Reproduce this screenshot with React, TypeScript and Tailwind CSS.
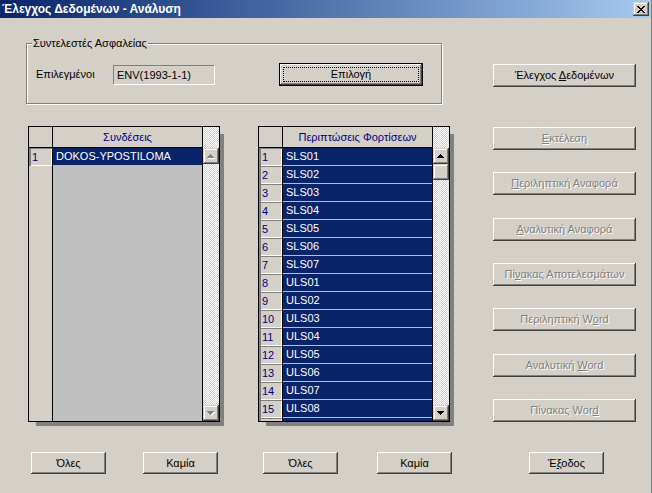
import React from "react";

const BEVEL =
  "shadow-[inset_-1px_-1px_0_#404040,inset_1px_1px_0_#ffffff,inset_-2px_-2px_0_#808080,inset_2px_2px_0_#d4d0c8]";
const SBEVEL =
  "shadow-[inset_-1px_-1px_0_#404040,inset_1px_1px_0_#d4d0c8,inset_-2px_-2px_0_#808080,inset_2px_2px_0_#ffffff]";

function Btn({
  children,
  className = "",
  disabled = false,
}: {
  children: React.ReactNode;
  className?: string;
  disabled?: boolean;
}) {
  return (
    <div
      className={`flex items-center justify-center bg-[#d4d0c8] text-[11px] leading-none ${BEVEL} ${
        disabled ? "text-[#808080] [text-shadow:1px_1px_0_#ffffff]" : "text-black"
      } ${className}`}
    >
      <span className="whitespace-nowrap">{children}</span>
    </div>
  );
}

function Arrow({ up, disabled }: { up: boolean; disabled?: boolean }) {
  const d = up
    ? "M3 0h1v1h1v1h1v1h1v1H0V3h1V2h1V1h1z"
    : "M0 0h7v1H6v1H5v1H4v1H3V3H2V2H1V1H0z";
  return (
    <svg width="8" height="5" viewBox="0 0 8 5" className="block">
      {disabled && <path d={d} fill="#ffffff" transform="translate(1 1)" />}
      <path d={d} fill={disabled ? "#808080" : "#000000"} />
    </svg>
  );
}

function SBtn({ up, disabled }: { up: boolean; disabled?: boolean }) {
  return (
    <div className={`h-[16px] w-[16px] shrink-0 flex items-center justify-center bg-[#d4d0c8] ${SBEVEL}`}>
      <Arrow up={up} disabled={disabled} />
    </div>
  );
}

function Grid({
  header,
  rows,
  enabled,
}: {
  header: string;
  rows: string[];
  enabled: boolean;
}) {
  return (
    <div className="w-[192px] h-[296px] border border-black flex bg-[#c0c0c0] shadow-[6px_6px_0_-2px_#808080] overflow-hidden">
      <div className="w-[174px] h-full border-r border-black flex flex-col">
        <div className="h-[21px] shrink-0 flex border-b border-black bg-[#d4d0c8]">
          <div className="w-[24px] h-full border-r border-black" />
          <div className="flex-1 flex items-center justify-center text-[#000080] text-[11px] leading-none pt-[1px]">
            {header}
          </div>
        </div>
        <div className="flex-1 flex overflow-hidden">
          <div className="w-[24px] h-full border-r border-black bg-[#d4d0c8] flex flex-col">
            {rows.map((_, i) => (
              <div
                key={i}
                className="h-[18px] shrink-0 pl-[3px] text-[11px] leading-[18px] text-[#000080] shadow-[inset_2px_1px_0_#808080,inset_-1px_-1px_0_#ffffff]"
              >
                {i + 1}
              </div>
            ))}
          </div>
          <div className="flex-1 h-full flex flex-col">
            {rows.map((r, i) => (
              <div
                key={i}
                className="h-[18px] shrink-0 bg-[#0a246a] border-b border-[#b8bccc] pl-[3px] text-[11px] leading-[17px] text-white"
              >
                {r}
              </div>
            ))}
          </div>
        </div>
      </div>
      <div className="w-[16px] h-full flex flex-col [background-image:repeating-conic-gradient(#d4d0c8_0_25%,#ffffff_0_50%)] [background-size:2px_2px]">
        <div className="h-[21px] shrink-0" />
        <SBtn up disabled={!enabled} />
        {enabled && <div className={`h-[16px] w-[16px] shrink-0 bg-[#d4d0c8] ${SBEVEL}`} />}
        <div className="flex-1" />
        <SBtn up={false} disabled={!enabled} />
      </div>
    </div>
  );
}

const loadCases = [
  "SLS01",
  "SLS02",
  "SLS03",
  "SLS04",
  "SLS05",
  "SLS06",
  "SLS07",
  "ULS01",
  "ULS02",
  "ULS03",
  "ULS04",
  "ULS05",
  "ULS06",
  "ULS07",
  "ULS08",
  "ULS09",
];

export default function App() {
  return (
    <div className="w-[652px] h-[493px] bg-[#d4d0c8] flex flex-col overflow-hidden font-['Liberation_Sans',Arial,sans-serif] text-[11px] text-black border-r border-[#808080]">
      {/* title bar */}
      <div className="h-[18px] shrink-0 flex items-center bg-gradient-to-r from-[#0a246a] to-[#a6caf0] pl-[2px] pr-[2px]">
        <span className="flex-1 text-white font-bold text-[12px] leading-none">
          Έλεγχος Δεδομένων - Ανάλυση
        </span>
        <div className={`w-[16px] h-[14px] flex items-center justify-center bg-[#d4d0c8] ${SBEVEL}`}>
          <svg width="8" height="7" viewBox="0 0 8 7" className="block">
            <path
              d="M0 0h2v1h1v1h2V1h1V0h2v1H7v1H6v1H5v1h1v1h1v1h1v1H6V6H5V5H3v1H2v1H0V6h1V5h1V4h1V3H2V2H1V1H0z"
              fill="#000"
            />
          </svg>
        </div>
      </div>

      {/* top row */}
      <div className="flex items-start mt-[25px] shrink-0">
        <div className="relative ml-[26px] w-[416px] h-[61px] border border-[#808080] shadow-[inset_1px_1px_0_#ffffff,1px_1px_0_#ffffff]">
          <span className="absolute left-[5px] -top-[8px] bg-[#d4d0c8] px-[1px] leading-[14px] text-[11px]">
            Συντελεστές Ασφαλείας
          </span>
          <div className="flex items-center mt-[19px] ml-[9px]">
            <span className="w-[77px] text-[11px] leading-none">Επιλεγμένοι</span>
            <div className="w-[101px] h-[19px] flex items-center pl-[3px] border-t border-l border-[#808080] shadow-[1px_1px_0_#ffffff] text-[11px] leading-none">
              ENV(1993-1-1)
            </div>
            <div className="ml-[65px] w-[144px] h-[23px] border border-black flex p-[3px] bg-[#d4d0c8] shadow-[inset_-1px_-1px_0_#404040,inset_1px_1px_0_#ffffff,inset_-2px_-2px_0_#808080]">
              <div className="flex-1 border border-dotted border-black flex items-center justify-center text-[11px] leading-none">
                Επιλογή
              </div>
            </div>
          </div>
        </div>
        <Btn className="ml-[51px] mt-[21px] w-[143px] h-[23px]">
          Έλεγχος <u>Δ</u>εδομένων
        </Btn>
      </div>

      {/* middle row */}
      <div className="flex items-start mt-[22px] shrink-0">
        <div className="ml-[28px]">
          <Grid header="Συνδέσεις" rows={["DOKOS-YPOSTILOMA"]} enabled={false} />
        </div>
        <div className="ml-[38px]">
          <Grid header="Περιπτώσεις Φορτίσεων" rows={loadCases} enabled />
        </div>
        <div className="ml-[43px] mt-[1px] w-[143px] h-[295px] flex flex-col justify-between">
          <Btn disabled className="h-[23px]">
            <u>Ε</u>κτέλεση
          </Btn>
          <Btn disabled className="h-[23px]">
            <u>Π</u>εριληπτική Αναφορά
          </Btn>
          <Btn disabled className="h-[23px]">
            <u>Α</u>ναλυτική Αναφορά
          </Btn>
          <Btn disabled className="h-[23px]">
            Πί<u>ν</u>ακας Αποτελεσμάτων
          </Btn>
          <Btn disabled className="h-[23px]">
            Περιληπτική W<u>o</u>rd
          </Btn>
          <Btn disabled className="h-[23px]">
            Αναλυτική <u>W</u>ord
          </Btn>
          <Btn disabled className="h-[23px]">
            Πίνακας Wor<u>d</u>
          </Btn>
        </div>
      </div>

      {/* bottom row */}
      <div className="flex items-start mt-[30px] shrink-0">
        <Btn className="ml-[31px] w-[75px] h-[22px]">Όλες</Btn>
        <Btn className="ml-[37px] w-[75px] h-[22px]">Καμία</Btn>
        <Btn className="ml-[45px] w-[75px] h-[22px]">Όλες</Btn>
        <Btn className="ml-[39px] w-[75px] h-[22px]">Καμία</Btn>
        <Btn className="ml-[77px] w-[75px] h-[22px]">
          Έ<u>ξ</u>οδος
        </Btn>
      </div>
    </div>
  );
}
